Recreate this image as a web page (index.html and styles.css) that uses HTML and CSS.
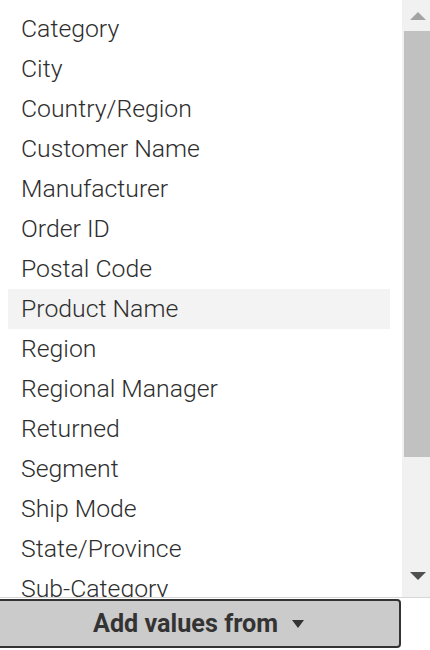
FILE: index.html
```html
<!DOCTYPE html>
<html>
<head>
<meta charset="utf-8">
<link rel="stylesheet" href="styles.css">
</head>
<body>
<div class="panel">
  <div class="listbox">
    <ul class="items">
      <li class="item">Category</li>
      <li class="item">City</li>
      <li class="item">Country/Region</li>
      <li class="item">Customer Name</li>
      <li class="item">Manufacturer</li>
      <li class="item">Order ID</li>
      <li class="item">Postal Code</li>
      <li class="item item-hover">Product Name</li>
      <li class="item">Region</li>
      <li class="item">Regional Manager</li>
      <li class="item">Returned</li>
      <li class="item">Segment</li>
      <li class="item">Ship Mode</li>
      <li class="item">State/Province</li>
      <li class="item">Sub-Category</li>
    </ul>
    <div class="scrollbar">
      <div class="arrow arrow-up"></div>
      <div class="track"><div class="thumb"></div></div>
      <div class="arrow arrow-down"></div>
    </div>
  </div>
  <div class="footer">
    <button class="add-btn">Add values from <span class="caret"></span></button>
  </div>
</div>
</body>
</html>
```
FILE: styles.css
```css
html, body {
  margin: 0;
  padding: 0;
  background: #ffffff;
}
.panel {
  width: 430px;
  height: 650px;
  display: flex;
  flex-direction: column;
  font-family: Roboto, "Liberation Sans", sans-serif;
  color: #333333;
}
.listbox {
  height: 597px;
  display: flex;
  border-bottom: 1px solid #d6d6d6;
  overflow: hidden;
}
.items {
  flex: 1;
  list-style: none;
  margin: 0;
  padding: 9px 12px 0 8px;
  overflow: hidden;
}
.item {
  height: 40px;
  line-height: 40px;
  padding-left: 13px;
  font-size: 24.8px;
  font-weight: 300;
  color: #2e2e2e;
  white-space: nowrap;
}
.item-hover {
  background: #f3f3f3;
}
.scrollbar {
  width: 28px;
  background: #f1f1f1;
  display: flex;
  flex-direction: column;
  align-items: stretch;
}
.arrow {
  height: 31px;
  display: flex;
  align-items: center;
  justify-content: center;
}
.arrow-up::before {
  content: "";
  width: 0;
  height: 0;
  border-left: 8px solid transparent;
  border-right: 8px solid transparent;
  border-bottom: 8px solid #a3a3a3;
  margin-left: 4px;
}
.arrow-down {
  height: 140px;
  align-items: flex-start;
  padding-top: 115px;
  box-sizing: border-box;
}
.arrow-down::before {
  content: "";
  width: 0;
  height: 0;
  border-left: 8px solid transparent;
  border-right: 8px solid transparent;
  border-top: 8px solid #505050;
  margin-left: 4px;
}
.track {
  flex: 1;
  display: flex;
  padding-left: 2px;
}
.thumb {
  flex: 1;
  background: #c1c1c1;
}
.footer {
  padding-top: 1px;
  display: flex;
}
.add-btn {
  width: 405px;
  height: 49px;
  margin-left: -4px;
  background: #cbcbcb;
  border: 2px solid #333333;
  border-radius: 4px;
  font-family: Roboto, "Liberation Sans", sans-serif;
  font-size: 25.2px;
  font-weight: 700;
  color: #333333;
  display: flex;
  align-items: center;
  justify-content: center;
  gap: 14px;
  padding: 0;
}
.caret {
  width: 0;
  height: 0;
  border-left: 6px solid transparent;
  border-right: 6px solid transparent;
  border-top: 8px solid #333333;
}
```
